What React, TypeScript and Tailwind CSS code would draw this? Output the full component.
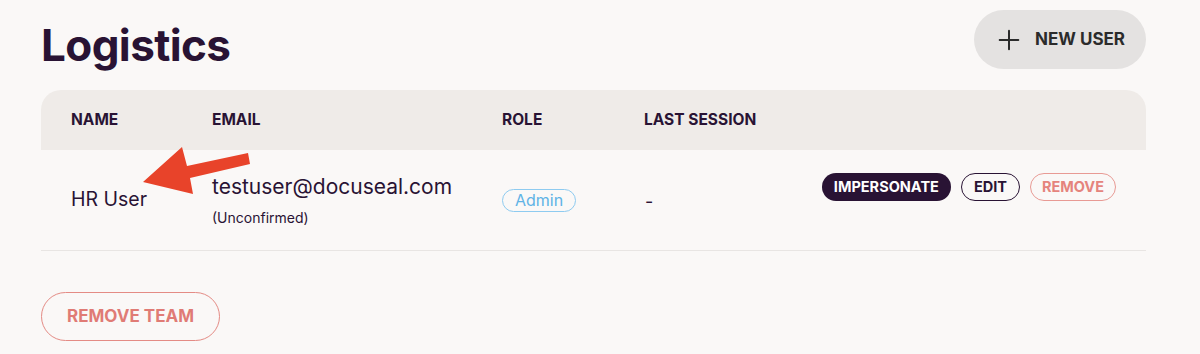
import { Plus } from 'lucide-react';

const font = { fontFamily: 'Inter, "Noto Sans", sans-serif' };

function Arrow() {
  // red annotation arrow pointing at the user name
  return (
    <svg
      className="absolute left-[130px] top-[140px] pointer-events-none"
      width="130"
      height="60"
      viewBox="0 0 130 60"
    >
      <polygon
        points="13,42 52,7 57,26 118,13 120,24 60,38 63,54"
        fill="#e8432a"
      />
    </svg>
  );
}

export default function App() {
  return (
    <div className="min-h-[354px] bg-[#faf8f7] pl-[41px] pr-[54px] pt-[10px] text-[#291334] relative" style={font}>
      <div className="flex items-start justify-between">
        <h1 className="mt-[13px] text-[44px] font-bold leading-none tracking-[-0.6px]">Logistics</h1>
        <button className="h-[59px] rounded-full bg-[#e4e2e1] pl-[19px] pr-[21px] flex items-center gap-[10px] text-[17px] font-bold text-[#2b2b2b]">
          <Plus size={32} strokeWidth={1.5} />
          NEW USER
        </button>
      </div>

      <div className="mt-[21px]">
        <div className="h-[60px] rounded-t-[20px] bg-[#efebe8] grid grid-cols-[171px_290px_142px_1fr] items-center text-[15.5px] font-bold">
          <div className="pl-[30px]">NAME</div>
          <div>EMAIL</div>
          <div>ROLE</div>
          <div>LAST SESSION</div>
        </div>
        <div className="h-[101px] border-b border-[#e8e5e3] grid grid-cols-[171px_290px_142px_1fr] items-center">
          <div className="pl-[30px] text-[19.5px]">HR User</div>
          <div>
            <div className="text-[21px] leading-[28px]">testuser@docuseal.com</div>
            <div className="text-[14px] leading-[20px] mt-[7px]">(Unconfirmed)</div>
          </div>
          <div>
            <span className="inline-flex h-[23px] items-center rounded-full border border-[#8ecbf0] px-[12px] text-[16px] text-[#5fb3e6]">
              Admin
            </span>
          </div>
          <div className="flex items-start justify-between self-stretch">
            <div className="self-center text-[18px] pl-[1px] pt-[3px]">-</div>
            <div className="flex gap-[10px] pr-[30px] pt-[23px]">
              <button className="h-[28px] rounded-full bg-[#291334] px-[12px] text-[14.5px] font-bold text-white">
                IMPERSONATE
              </button>
              <button className="h-[28px] rounded-full border border-[#291334] px-[12px] text-[14.5px] font-bold">
                EDIT
              </button>
              <button className="h-[28px] rounded-full border border-[#e89a94] px-[11px] text-[14.5px] font-bold text-[#e5847d]">
                REMOVE
              </button>
            </div>
          </div>
        </div>
      </div>

      <button className="mt-[41px] h-[49px] w-[179px] rounded-full border border-[#e48b85] text-[17px] font-bold text-[#e07b75]">
        REMOVE TEAM
      </button>

      <Arrow />
    </div>
  );
}
